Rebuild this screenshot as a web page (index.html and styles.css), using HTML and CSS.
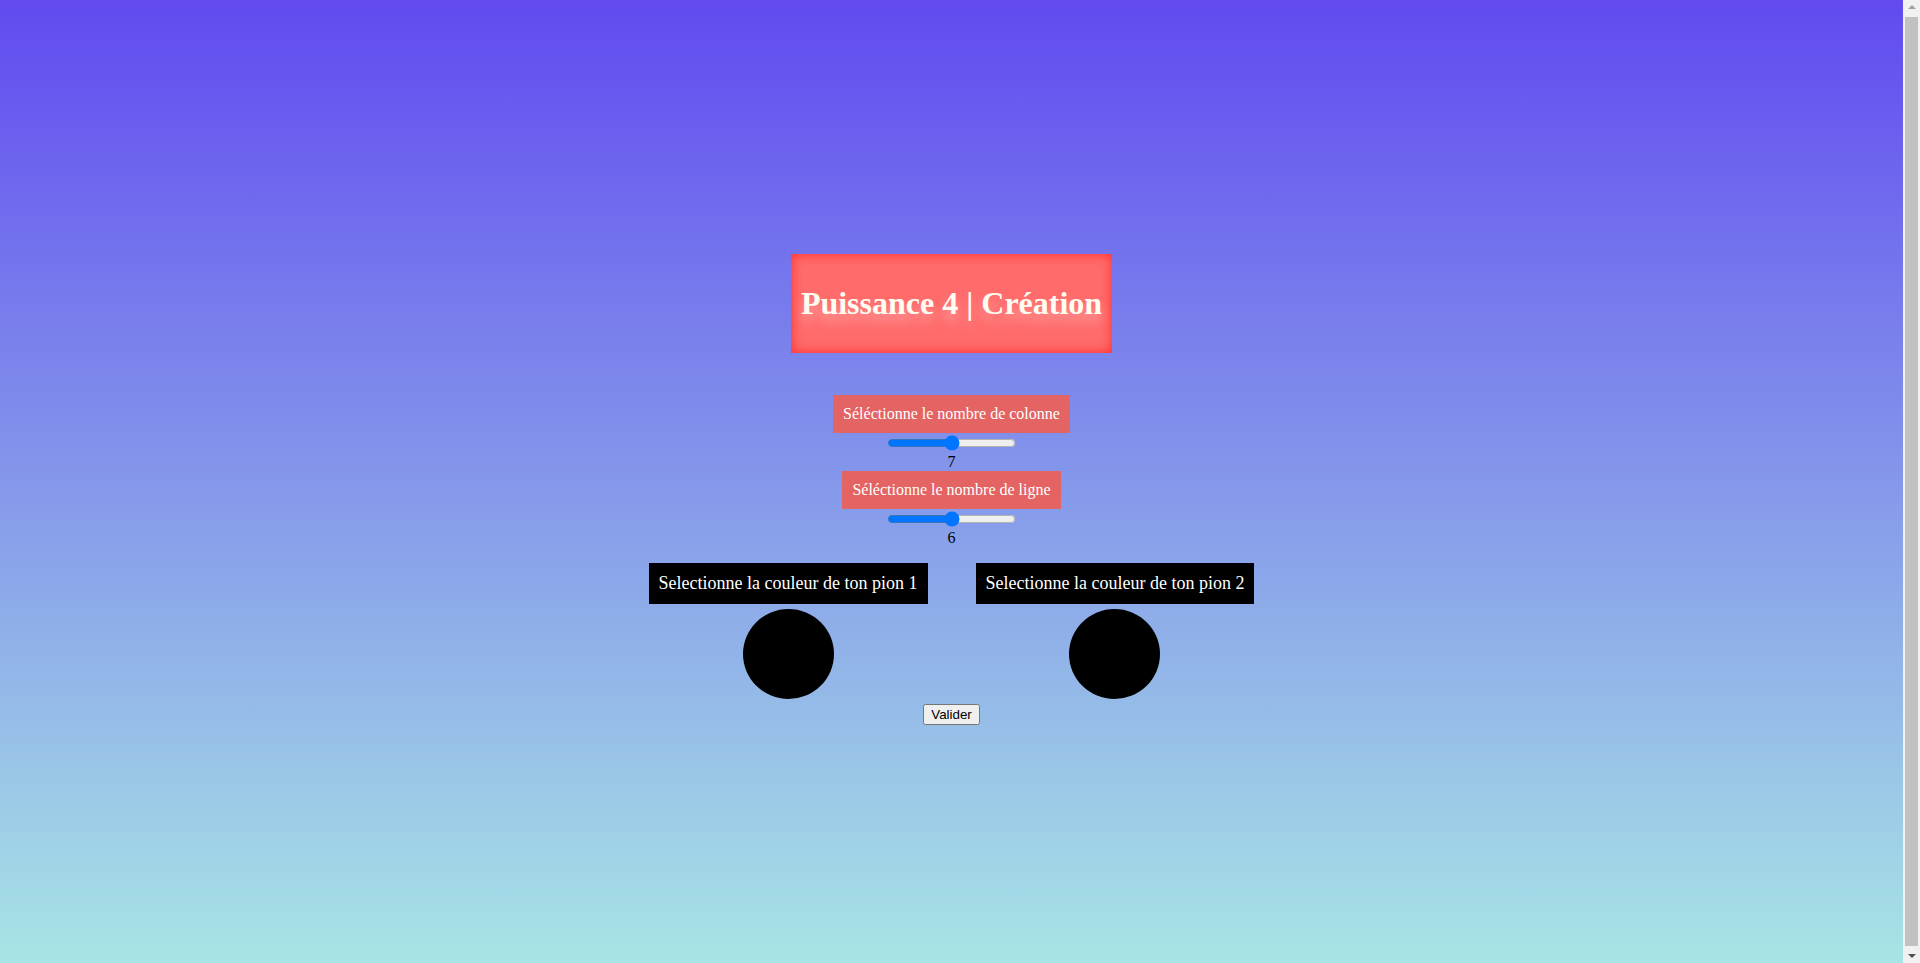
FILE: index.html
```html
<!DOCTYPE html>
<html lang="fr">
<head>
<meta charset="utf-8">
<title>Puissance 4 | Création</title>
<link rel="stylesheet" href="styles.css">
</head>
<body>
  <h1 class="title">Puissance 4 | Création</h1>
  <div class="settings">
    <div class="label">Séléctionne le nombre de colonne</div>
    <input class="range" type="range" min="4" max="10" value="7">
    <div class="value">7</div>
    <div class="label">Séléctionne le nombre de ligne</div>
    <input class="range" type="range" min="4" max="8" value="6">
    <div class="value">6</div>
  </div>
  <div class="players">
    <div class="player">
      <div class="player-label">Selectionne la couleur de ton pion 1</div>
      <div class="pion"></div>
    </div>
    <div class="player">
      <div class="player-label">Selectionne la couleur de ton pion 2</div>
      <div class="pion"></div>
    </div>
  </div>
  <button class="validate" type="button">Valider</button>
  <div class="scrollbar" aria-hidden="true">
    <div class="arrow arrow-up"></div>
    <div class="thumb"></div>
    <div class="arrow arrow-down"></div>
  </div>
</body>
</html>
```
FILE: styles.css
```css
html {
  background: linear-gradient(180deg, #614af0 0%, #a9e7e5 100%);
  min-height: 100%;
  overflow: hidden;
}
body {
  margin: 8px 25px 8px 8px;
  height: 100vh;
  display: flex;
  flex-direction: column;
  align-items: center;
  justify-content: center;
  font-family: "Liberation Serif", "Times New Roman", serif;
  color: #000;
}
.title {
  margin: 0;
  padding: 31px 10px;
  font-size: 32px;
  line-height: 37px;
  font-weight: bold;
  color: #fffdf2;
  background: #ff6b6b;
  box-shadow: inset 0 0 12px #ff2a2a;
  text-shadow: 0 8px 12px rgba(255, 255, 255, 0.35);
}
.settings {
  margin-top: 42px;
  display: flex;
  flex-direction: column;
  align-items: center;
}
.label {
  padding: 10px;
  font-size: 16px;
  line-height: 18px;
  color: #fff;
  background: #e46363;
}
.range {
  margin: 2px;
  width: 129px;
  height: 16px;
}
.value {
  font-size: 16px;
  line-height: 18px;
}
.players {
  margin-top: 16px;
  display: flex;
  gap: 48px;
}
.player {
  display: flex;
  flex-direction: column;
  align-items: center;
}
.player-label {
  padding: 10px;
  font-size: 18px;
  line-height: 21px;
  color: #fff;
  background: #000;
}
.pion {
  margin-top: 5px;
  width: 91px;
  height: 90px;
  border-radius: 50%;
  background: #000;
}
.validate {
  margin-top: 5px;
  font-family: Arial, "Liberation Sans", sans-serif;
  font-size: 13.333px;
}
.scrollbar {
  position: fixed;
  top: 0;
  right: 0;
  width: 17px;
  height: 100vh;
  background: #f1f1f1;
  display: flex;
  flex-direction: column;
  align-items: center;
}
.arrow {
  width: 0;
  height: 0;
  border-left: 4px solid transparent;
  border-right: 4px solid transparent;
  margin: 5px 0;
}
.arrow-up {
  border-bottom: 4px solid #a3a3a3;
}
.arrow-down {
  border-top: 4px solid #505050;
}
.thumb {
  flex: 1;
  width: 13px;
  margin: 3px 0;
  background: #c1c1c1;
}
```
